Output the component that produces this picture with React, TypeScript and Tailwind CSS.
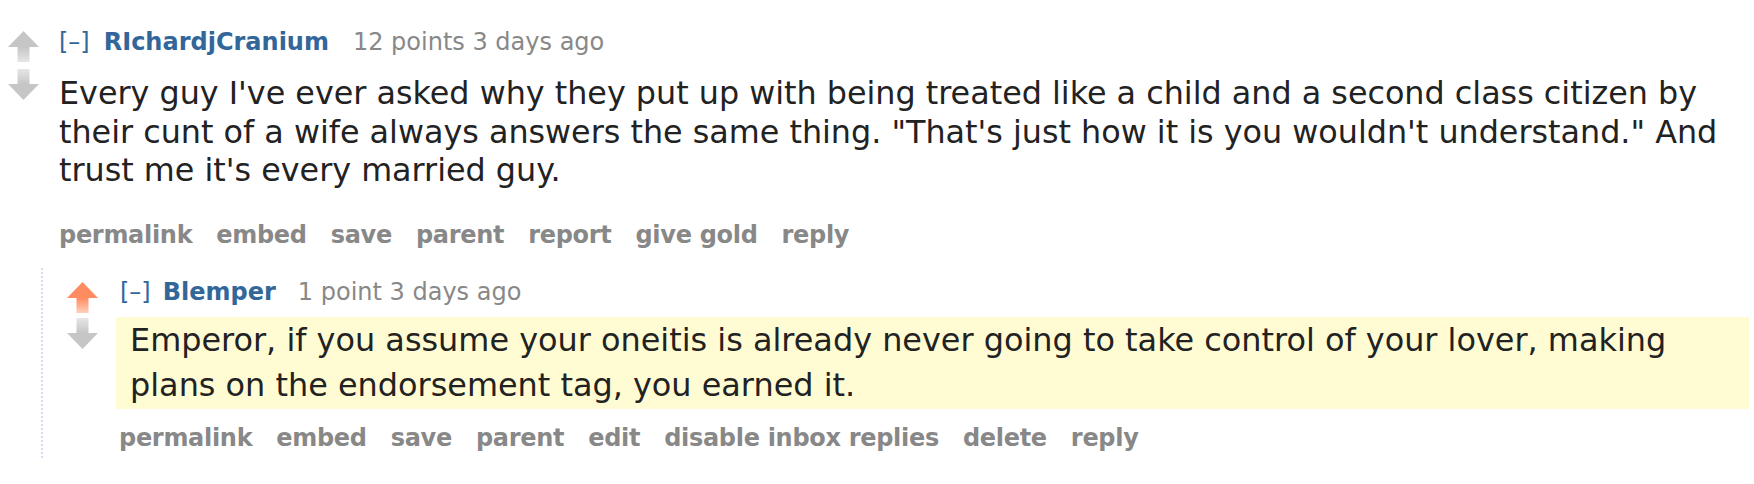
import React from "react";

function Arrow({ dir, color }: { dir: "up" | "down"; color: "gray" | "orange" }) {
  const head = color === "orange" ? "#ff8b60" : "#c6c6c6";
  const fade = color === "orange" ? "#ffd0bd" : "#e6e6e6";
  const id = `g-${dir}-${color}`;
  return (
    <svg width="31" height="31" viewBox="0 0 31 31" className="block">
      <defs>
        <linearGradient id={id} x1="0" y1="0" x2="0" y2="1">
          <stop offset="0" stopColor={dir === "up" ? head : fade} />
          <stop offset="1" stopColor={dir === "up" ? fade : head} />
        </linearGradient>
      </defs>
      {dir === "up" ? (
        <>
          <polygon points="15.5,0 31,16 0,16" fill={head} />
          <rect x="9.5" y="16" width="12" height="15" fill={`url(#${id})`} />
        </>
      ) : (
        <>
          <rect x="9.5" y="0" width="12" height="15" fill={`url(#${id})`} />
          <polygon points="0,15 31,15 15.5,31" fill={head} />
        </>
      )}
    </svg>
  );
}

const Actions = ({ items }: { items: string[] }) => (
  <ul className="flex gap-[24px] text-[24px] leading-[24px] font-bold text-[#888888] tracking-[-0.3px]">
    {items.map((i) => (
      <li key={i}>{i}</li>
    ))}
  </ul>
);

export default function App() {
  return (
    <div className="w-[1754px] h-[484px] bg-white overflow-hidden font-['Verdana','DejaVu_Sans',sans-serif] text-[#222222]">
      <div className="pt-[30px]">
        <div className="flex">
          <div className="w-[31px] ml-[8px] mt-[1px] flex flex-col gap-[7px]">
            <Arrow dir="up" color="gray" />
            <Arrow dir="down" color="gray" />
          </div>
          <div className="ml-[20px] flex-1">
            <div className="text-[24px] leading-[24px] flex items-baseline">
              <span className="text-[#336699]">[–]</span>
              <span className="ml-[14px] font-bold text-[#336699]">RIchardjCranium</span>
              <span className="ml-[24px] text-[#888888]">12 points 3 days ago</span>
            </div>
            <div className="mt-[20px] text-[31.8px] leading-[38.5px]">
              <p>
                Every guy I've ever asked why they put up with being treated like a child and a second class citizen by
                <br />
                their cunt of a wife always answers the same thing. "That's just how it is you wouldn't understand." And
                <br />
                trust me it's every married guy.
              </p>
            </div>
            <div className="mt-[33px]">
              <Actions items={["permalink", "embed", "save", "parent", "report", "give gold", "reply"]} />
            </div>
          </div>
        </div>
        <div className="ml-[41px] mt-[21px] border-l-2 border-dotted border-[#d9d9f5] flex pb-[8px]">
          <div className="w-[31px] ml-[24px] mt-[14px] flex flex-col gap-[5px]">
            <Arrow dir="up" color="orange" />
            <Arrow dir="down" color="gray" />
          </div>
          <div className="ml-[18px] flex-1 pt-[12px]">
            <div className="pl-[4px] text-[24px] leading-[24px] flex items-baseline">
              <span className="text-[#336699]">[–]</span>
              <span className="ml-[12px] font-bold text-[#336699]">Blemper</span>
              <span className="ml-[22px] text-[#888888]">1 point 3 days ago</span>
            </div>
            <div className="mt-[13px] mr-[5px] bg-[#fffcd3] pl-[14px] py-[1px] text-[31.9px] leading-[45px]">
              <p>
                Emperor, if you assume your oneitis is already never going to take control of your lover, making
                <br />
                plans on the endorsement tag, you earned it.
              </p>
            </div>
            <div className="mt-[17px] pl-[3px]">
              <Actions items={["permalink", "embed", "save", "parent", "edit", "disable inbox replies", "delete", "reply"]} />
            </div>
          </div>
        </div>
      </div>
    </div>
  );
}
